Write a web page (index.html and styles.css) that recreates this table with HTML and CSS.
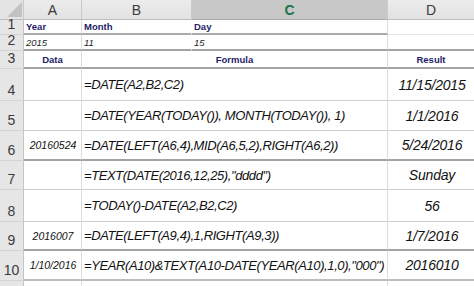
FILE: index.html
```html
<!DOCTYPE html>
<html>
<head>
<meta charset="utf-8">
<link rel="stylesheet" href="styles.css">
</head>
<body>
<div class="sheet">
  <div class="row head">
    <div class="corner"><div class="tri"></div></div>
    <div class="ch">A</div>
    <div class="ch">B</div>
    <div class="ch sel">C</div>
    <div class="ch last">D</div>
  </div>

  <div class="row r1">
    <div class="rh">1</div>
    <div class="c lbl">Year</div>
    <div class="c lbl nob">Month</div>
    <div class="c lbl">Day</div>
    <div class="c d"></div>
  </div>

  <div class="row r2 thick">
    <div class="rh">2</div>
    <div class="c val">2015</div>
    <div class="c val nob">11</div>
    <div class="c val">15</div>
    <div class="c d"></div>
  </div>

  <div class="row r3 thick">
    <div class="rh">3</div>
    <div class="c lbl center">Data</div>
    <div class="c lbl center span2">Formula</div>
    <div class="c lbl center d">Result</div>
  </div>

  <div class="row">
    <div class="rh">4</div>
    <div class="c data"></div>
    <div class="c f span2">=DATE(A2,B2,C2)</div>
    <div class="c res d">11/15/2015</div>
  </div>

  <div class="row">
    <div class="rh">5</div>
    <div class="c data"></div>
    <div class="c f span2">=DATE(YEAR(TODAY()), MONTH(TODAY()), 1)</div>
    <div class="c res d">1/1/2016</div>
  </div>

  <div class="row thick">
    <div class="rh">6</div>
    <div class="c data">20160524</div>
    <div class="c f span2">=DATE(LEFT(A6,4),MID(A6,5,2),RIGHT(A6,2))</div>
    <div class="c res d">5/24/2016</div>
  </div>

  <div class="row">
    <div class="rh">7</div>
    <div class="c data"></div>
    <div class="c f span2">=TEXT(DATE(2016,12,25),"dddd")</div>
    <div class="c res d">Sunday</div>
  </div>

  <div class="row">
    <div class="rh">8</div>
    <div class="c data"></div>
    <div class="c f span2">=TODAY()-DATE(A2,B2,C2)</div>
    <div class="c res d">56</div>
  </div>

  <div class="row thick">
    <div class="rh">9</div>
    <div class="c data">2016007</div>
    <div class="c f span2">=DATE(LEFT(A9,4),1,RIGHT(A9,3))</div>
    <div class="c res d">1/7/2016</div>
  </div>

  <div class="row mid">
    <div class="rh">10</div>
    <div class="c data">1/10/2016</div>
    <div class="c f span2">=YEAR(A10)&amp;TEXT(A10-DATE(YEAR(A10),1,0),"000")</div>
    <div class="c res d">2016010</div>
  </div>

  <div class="row tail">
    <div class="rh"></div>
    <div class="c"></div>
    <div class="c span2"></div>
    <div class="c d"></div>
  </div>
</div>
</body>
</html>
```

FILE: styles.css
```css
* { box-sizing: border-box; }

html, body {
  margin: 0;
  padding: 0;
  background: #ffffff;
}

body {
  font-family: "Liberation Sans", Arial, sans-serif;
  color: #111;
  width: 474px;
  height: 286px;
  overflow: hidden;
}

.sheet {
  display: grid;
  grid-template-columns: 24px 58px 110px 196px 86px;
  grid-template-rows: 20px 15px 16px 18px 32px 30px 30px 29px 32px 29px 30px 5px;
}

.row { display: contents; }

/* column header row */
.corner {
  background: #e4e4e4;
  border-right: 1px solid #c9c9c9;
  border-bottom: 1px solid #bdbdbd;
  display: flex;
  justify-content: flex-end;
  align-items: flex-end;
  padding: 0 1px 2px 0;
}
.tri {
  width: 15px;
  height: 15px;
  background: #c2c2c2;
  clip-path: polygon(100% 0, 100% 100%, 0 100%);
}

.ch {
  background: linear-gradient(#ececec, #e2e2e2);
  border-right: 1px solid #cbcbcb;
  border-bottom: 1px solid #bdbdbd;
  display: flex;
  align-items: center;
  justify-content: center;
  font-size: 14px;
  color: #3c3c3c;
  padding-top: 1px;
}
.ch.sel {
  background: #c8c8c8;
  border-bottom: 1px solid #a9a9a9;
  color: #217346;
  font-weight: bold;
  font-size: 14px;
}
.ch.last { border-right: none; }

/* row headers */
.rh {
  background: #e6e6e6;
  border-right: 1px solid #c4c4c4;
  border-bottom: 1px solid #d3d3d3;
  display: flex;
  justify-content: center;
  align-items: flex-end;
  font-size: 14px;
  line-height: 15px;
  color: #3c3c3c;
  padding-bottom: 2px;
  overflow: visible;
}

/* cells */
.c {
  background: #fff;
  border-right: 1px solid #dcdcdc;
  border-bottom: 1px solid #cfcfcf;
  display: flex;
  align-items: center;
  white-space: nowrap;
  overflow: visible;
  min-width: 0;
}
.c.nob { border-right-color: transparent; }
.c.d { border-right: none; }
.span2 { grid-column: span 2; }

.r1 .c { border-bottom: 2px solid #ababab; }
.r1 .c.d { border-bottom: 1px solid #e4e4e4; }

.thick .c { border-bottom: 2px solid #a3a3a3; }
.mid .c { border-bottom: 2px solid #bdbdbd; }
.tail .c { border-bottom: none; }
.tail .rh { border-bottom: none; }

.lbl {
  font-weight: bold;
  font-size: 9.5px;
  color: #1d1d6b;
  padding-left: 2px;
}
.r1 .lbl:first-of-type { padding-left: 3px; }
.center { justify-content: center; padding-left: 0; }
.r3 .lbl { padding-top: 1px; }

.val {
  font-style: italic;
  font-size: 9.5px;
  color: #222;
  padding-left: 2px;
}

.data {
  justify-content: center;
  font-style: italic;
  font-size: 10.5px;
  color: #111;
  padding-left: 1px;
}

.f {
  font-style: italic;
  font-size: 13px;
  letter-spacing: -0.4px;
  padding-left: 2px;
  color: #111;
}

.res {
  justify-content: center;
  font-style: italic;
  font-size: 14px;
  letter-spacing: -0.2px;
  color: #111;
  padding-left: 2px;
}
```
